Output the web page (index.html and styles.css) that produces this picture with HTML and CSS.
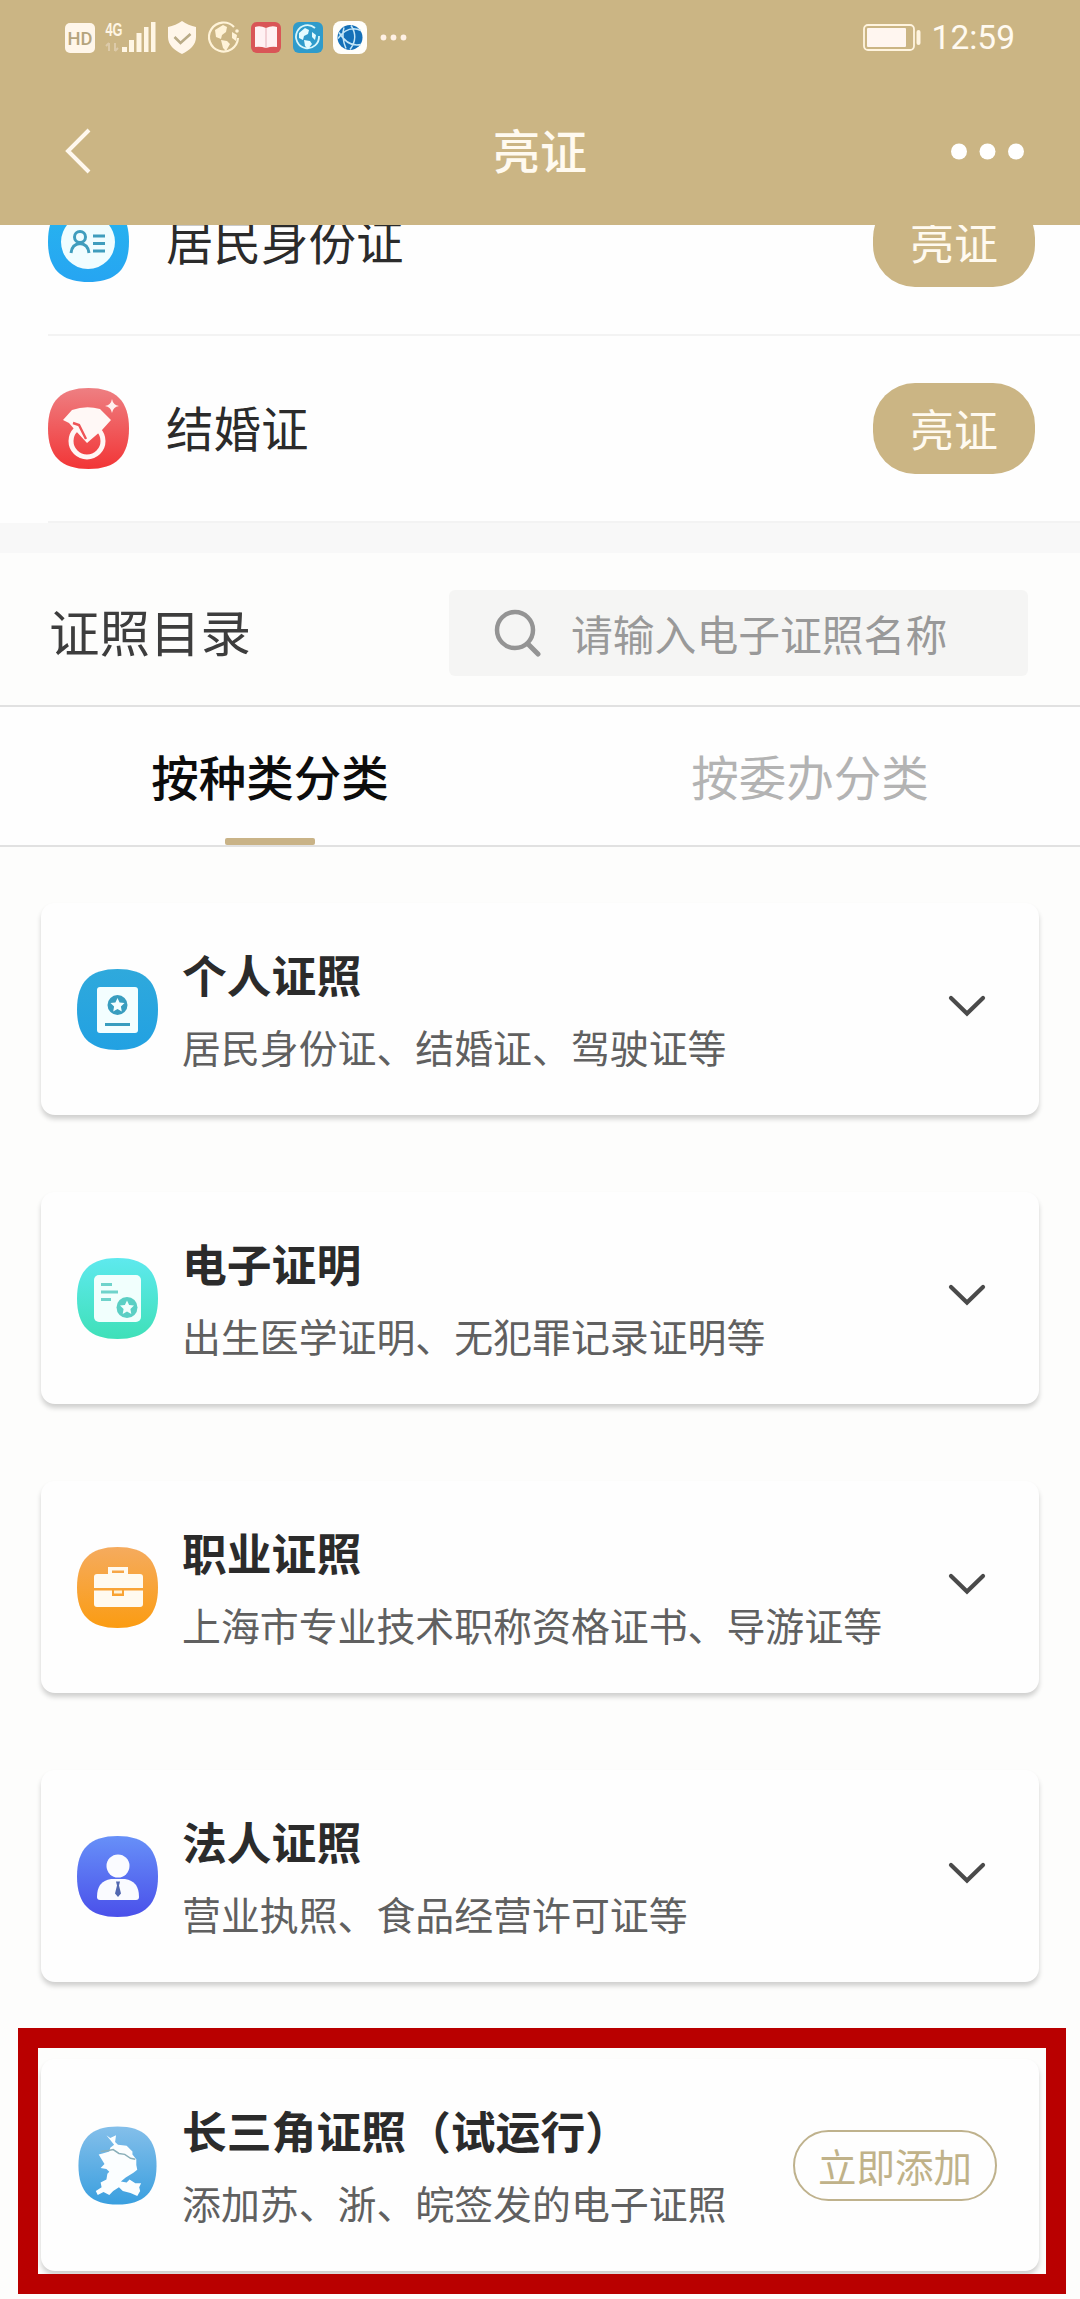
FILE: index.html
```html
<!DOCTYPE html>
<html lang="zh-CN">
<head>
<meta charset="utf-8">
<title>亮证</title>
<link rel="stylesheet" href="styles.css">
</head>
<body>
<svg width="0" height="0" class="defs">
  <defs>
    <path id="squircle" d="M40.500 0C68 0 81 13 81 40.500S68 81 40.500 81 0 68 0 40.500 13 0 40.500 0z"/>
    <path id="star" d="M0-7l2.100 4.500 4.900.6-3.600 3.400.9 4.900L0 4l-4.300 2.400.9-4.900L-7-1.900l4.900-.6z"/>
    <linearGradient id="g-id" x2="0" y2="1"><stop stop-color="#27b5ee"/><stop offset="1" stop-color="#26a5f2"/></linearGradient>
    <linearGradient id="g-red" x2="0" y2="1"><stop stop-color="#ee7f82"/><stop offset="1" stop-color="#f23536"/></linearGradient>
    <linearGradient id="g-blue" x2="0" y2="1"><stop stop-color="#2fa9dc"/><stop offset="1" stop-color="#22a1e2"/></linearGradient>
    <linearGradient id="g-teal" x2="0" y2="1"><stop stop-color="#5ee9ee"/><stop offset="1" stop-color="#3fe0b8"/></linearGradient>
    <linearGradient id="g-orange" x2="0" y2="1"><stop stop-color="#f5ab5e"/><stop offset="1" stop-color="#fb9c12"/></linearGradient>
    <linearGradient id="g-indigo" x2="0" y2="1"><stop stop-color="#6790f8"/><stop offset="1" stop-color="#4a50ea"/></linearGradient>
    <linearGradient id="g-sky" x2="0" y2="1"><stop stop-color="#84bfea"/><stop offset="1" stop-color="#3a9fdf"/></linearGradient>
  </defs>
</svg>

<header class="header">
  <div class="status">
    <svg class="status-icons" width="350" height="40" viewBox="0 0 350 40">
      <rect x="1" y="5" width="30" height="30" rx="5" fill="#fff6ea"/>
      <text x="16" y="27" class="hd" textLength="25" lengthAdjust="spacingAndGlyphs">HD</text>
      <text x="50" y="18" class="net" textLength="17" lengthAdjust="spacingAndGlyphs">4G</text>
      <path d="M45 33v-8m-3 3l3-3M51 25v8m3-3l-3 3" stroke="#dccaa9" stroke-width="2" fill="none"/>
      <path d="M58 34v-5h5v5zM65 34V22h5v12zM72.500 34V15h5v19zM80 34V9h4.500v25zM87 34V4h4.500v30z" fill="#fff6e4"/>
      <path d="M118 3c4 3 9 5 14 6v10c0 8-6 13-14 17-8-4-14-9-14-17V9c5-1 10-3 14-6z" fill="#fff6ea"/>
      <path d="M110.500 19l6 6 10-9" stroke="#b9ab87" stroke-width="2.600" fill="none"/>
      <path d="M170 9a14.500 14.500 0 1 0 4 11" stroke="#fff3d8" stroke-width="2.200" fill="none"/><path d="M151 12l8-5 4 2-1 5-4 3-1 4-5-2zM157 22l6 1 3 3-4 7-3-3zM168 14l5 3-1 6-4-3z" fill="#fff3d8"/><circle cx="173" cy="13" r="1.800" fill="#fff3d8"/>
      <rect x="187" y="4" width="30" height="31" rx="6" fill="#d95557"/>
      <path d="M191 9q5-2 11 1 6-3 11-1v20q-5-1-11 1-6-2-11-1z" fill="#fff1f3"/><path d="M202 10v20" stroke="#eec5cb" stroke-width="1.500"/>
      <rect x="229" y="4" width="30" height="31" rx="6" fill="#2f9bcb"/>
      <path d="M251 10a11.500 11.500 0 1 0 4 8" stroke="#d9f6fb" stroke-width="1.800" fill="none"/><path d="M235 15l6-5 4 2-1 4-4 2-1 4-4-2zM240 22l6 1 2 3-4 5-3-3zM248 14l4 3-1 5-3-3z" fill="#e4fbff"/>
      <rect x="269" y="3" width="34" height="33" rx="8" fill="#fffefa"/>
      <circle cx="286" cy="19.500" r="12.500" fill="#1470b8"/>
      <path d="M274 20.500q10-14 23-8M275 14.500q9 15 22 12M287 7.500q8 12-1 24M280 9.500q-3 9 2 21" stroke="#c4e6f7" stroke-width="1.500" fill="none"/>
      <g fill="#fff1e5"><circle cx="319.500" cy="19.500" r="2.900"/><circle cx="329.500" cy="19.500" r="2.900"/><circle cx="339.500" cy="19.500" r="2.900"/></g>
    </svg>
    <div class="status-right">
      <svg width="60" height="30" viewBox="0 0 60 30"><rect x="1" y="2" width="50" height="25" rx="4" fill="none" stroke="#fff4df" stroke-width="1.800"/><rect x="4" y="5" width="39" height="19" rx="1" fill="#fff6f0"/><path d="M55.500 9v11" stroke="#fff4df" stroke-width="4" stroke-linecap="round"/></svg>
      <span class="clock">12:59</span>
    </div>
  </div>
  <div class="nav">
    <svg width="30" height="48" viewBox="0 0 30 48"><path d="M28 3L7 24l21 21" fill="none" stroke="#fff8ee" stroke-width="4"/></svg>
    <h1 class="title">亮证</h1>
    <svg width="76" height="18" viewBox="0 0 76 18" fill="#fff"><circle cx="10" cy="9.500" r="8"/><circle cx="38.500" cy="9.500" r="8"/><circle cx="67" cy="9.500" r="8"/></svg>
  </div>
</header>

<main>
  <section class="mine">
    <div class="mine-row">
      <svg class="icon" viewBox="0 0 81 81"><use href="#squircle" fill="url(#g-id)"/><circle cx="40" cy="41" r="27" fill="#f0fdff"/><g fill="none" stroke="#3f9dbd" stroke-width="3"><circle cx="32" cy="36" r="5.500"/><path d="M23 52q1-9 9-9.500 8 .5 9 9.500M45 35h12M45 42.500h12M45 50h12"/></g></svg>
      <span class="mine-name">居民身份证</span>
      <button class="show">亮证</button>
    </div>
    <div class="mine-row">
      <svg class="icon" viewBox="0 0 81 81"><use href="#squircle" fill="url(#g-red)"/><circle cx="39" cy="53" r="16" fill="none" stroke="#fff6f4" stroke-width="5"/><path d="M15 32l9-10q14-5 28-1l11 11-9 10-15 13-12-13-6-7z" fill="#fff8f6"/><path d="M25 35l6 2 7 14" stroke="#ee5457" stroke-width="2.400" fill="none"/><path d="M64 11q1 6 7 7-6 1-7 7-1-6-7-7 6-1 7-7z" fill="#fff0ef"/></svg>
      <span class="mine-name">结婚证</span>
      <button class="show">亮证</button>
    </div>
  </section>

  <section class="catalog">
    <h2 class="catalog-title">证照目录</h2>
    <div class="search">
      <svg width="48" height="48" viewBox="0 0 48 48" fill="none" stroke="#949494"><circle cx="21" cy="21" r="18" stroke-width="4.500"/><path d="M34 35l10 10" stroke-width="5" stroke-linecap="round"/></svg>
      <span>请输入电子证照名称</span>
    </div>
  </section>

  <nav class="tabs">
    <div class="tab active">按种类分类</div>
    <div class="tab">按委办分类</div>
  </nav>

  <section class="cards">
    <article class="card">
      <svg class="icon" viewBox="0 0 81 81"><use href="#squircle" fill="url(#g-blue)"/><rect x="20" y="18" width="41" height="46" rx="3" fill="#f3feff"/><circle cx="40.500" cy="36" r="10" fill="#389dbf"/><use href="#star" x="40.500" y="36" fill="#f3feff"/><path d="M28 55.500h25" stroke="#389dbf" stroke-width="3"/></svg>
      <div class="card-text"><h3>个人证照</h3><p>居民身份证、结婚证、驾驶证等</p></div>
      <svg class="chevron" viewBox="0 0 38 22"><path d="M3 3l16 15.500L35 3"/></svg>
    </article>
    <article class="card">
      <svg class="icon" viewBox="0 0 81 81"><use href="#squircle" fill="url(#g-teal)"/><rect x="17" y="17" width="47" height="47" rx="5" fill="#f1fffd"/><path d="M24 26.500h11M24 34h17M24 41.500h10" stroke="#6fd3cb" stroke-width="3"/><circle cx="50" cy="49.500" r="10.500" fill="#5bcfc4"/><use href="#star" x="50" y="49.500" fill="#f1fffd"/></svg>
      <div class="card-text"><h3>电子证明</h3><p>出生医学证明、无犯罪记录证明等</p></div>
      <svg class="chevron" viewBox="0 0 38 22"><path d="M3 3l16 15.500L35 3"/></svg>
    </article>
    <article class="card">
      <svg class="icon" viewBox="0 0 81 81"><use href="#squircle" fill="url(#g-orange)"/><path d="M31 27v-7h20v7h12q3 0 3 3v11H17V30q0-3 3-3zM35 23.500V26h12v-2.500zM17 43.500h18V49h12v-5.500h19V57q0 3-3 3H20q-3 0-3-3z" fill="#fffaf0" fill-rule="evenodd"/><path d="M37 43.500h8v3h-8z" fill="#fff2d8"/></svg>
      <div class="card-text"><h3>职业证照</h3><p>上海市专业技术职称资格证书、导游证等</p></div>
      <svg class="chevron" viewBox="0 0 38 22"><path d="M3 3l16 15.500L35 3"/></svg>
    </article>
    <article class="card">
      <svg class="icon" viewBox="0 0 81 81"><use href="#squircle" fill="url(#g-indigo)"/><circle cx="41" cy="30" r="11.500" fill="#fafbff"/><path d="M20 61q0-16 14-18h14q14 2 14 18 0 3-3 3H23q-3 0-3-3z" fill="#fafbff"/><path d="M39 45.500h4l-1 4 2 8-3 3.500-3-3.500 2-8z" fill="#5268b0"/></svg>
      <div class="card-text"><h3>法人证照</h3><p>营业执照、食品经营许可证等</p></div>
      <svg class="chevron" viewBox="0 0 38 22"><path d="M3 3l16 15.500L35 3"/></svg>
    </article>
    <article class="card">
      <svg class="icon" viewBox="-1.500 -1.500 84 84"><use href="#squircle" fill="url(#g-sky)"/><path d="M29 9l4 3 6-3-1 7 3 3 9 1 6 6 0 3 4 5v6l1 5-4 3-8 5-5 4 6 1 3-3 6 4 6 0-2 4 1 4-3 5-7-3-8-2-4-4-6 4-4 4-6-3-6 3-2-4 6-4-1-5 6-3 1-6 2-2-3-3-6-1 4-4-3-5-3-5 4-1 7-2 1-4 4-3z" fill="#fbfeff"/><path d="M23 26l8-1 5-1 6 4 6 1 6 4 5 1" fill="none" stroke="#8aafb9" stroke-width="1.500"/></svg>
      <div class="card-text"><h3>长三角证照（试运行）</h3><p>添加苏、浙、皖签发的电子证照</p></div>
      <button class="add">立即添加</button>
    </article>
  </section>
</main>
<div class="highlight"></div>
</body>
</html>
```
FILE: styles.css
```css
* { box-sizing: border-box; }
body {
  position: relative;
  margin: 0;
  width: 1080px;
  height: 2299px;
  overflow: hidden;
  background: #fdfdfc;
  font-family: "Noto Sans CJK SC", sans-serif;
  color: #2b2b2b;
}
h1, h2, h3, p { margin: 0; font-weight: 400; }
button { border: 0; padding: 0; font-family: inherit; }
svg { display: block; flex: none; }
.defs { position: absolute; }

.header { height: 225px; background: #cbb584; color: #fffaf0; }
.status {
  display: flex;
  justify-content: space-between;
  height: 76px;
  padding: 18px 65px 0 64px;
}
.hd { font: 500 19px Roboto, sans-serif; fill: #b5a47e; text-anchor: middle; }
.net { font: 700 18px "Liberation Sans", sans-serif; fill: #fff6e4; text-anchor: middle; }
.status-right { display: flex; align-items: center; gap: 9px; height: 40px; }
.clock { font: 400 33.500px/40px Roboto, sans-serif; }
.nav {
  display: flex;
  align-items: center;
  justify-content: space-between;
  height: 150px;
  padding: 0 55px 0 61px;
}
.title { font-size: 47px; line-height: 60px; margin: -5px 0 0 40px; font-weight: 500; }

.mine { height: 298px; overflow: hidden; display: flex; flex-direction: column; justify-content: flex-end; background: #fefefe; }
.mine-row {
  flex: none;
  display: flex;
  align-items: center;
  height: 187px;
  margin-left: 48px;
  padding-right: 45px;
  border-bottom: 2px solid #f3f3f3;
}
.icon { width: 81px; height: 81px; }
.mine-name { flex: 1; margin: -3px 0 0 37px; font-size: 47.500px; line-height: 60px; }
.show {
  width: 162px;
  height: 91px;
  border-radius: 42px;
  background: #cbb584;
  color: #fffaf0;
  font-size: 44px;
  line-height: 91px;
}

.catalog {
  display: flex;
  align-items: flex-start;
  justify-content: space-between;
  height: 184px;
  padding: 37px 52px 0 49px;
  border-top: 30px solid #f8f8f8;
  border-bottom: 2px solid #e1e1e1;
}
.catalog-title { font-size: 50.500px; line-height: 60px; color: #3d3d3d; margin-top: 10px; }
.search {
  display: flex;
  align-items: center;
  gap: 29px;
  width: 579px;
  height: 86px;
  padding-left: 45px;
  border-radius: 6px;
  background: #f5f5f4;
  color: #999;
  font-size: 41.800px;
  line-height: 50px;
}

.tabs { display: flex; height: 140px; border-bottom: 2px solid #e1e1e1; background: #fefefe; }
.tab { flex: 1; display: flex; flex-direction: column; align-items: center; font-size: 47.500px; line-height: 138px; color: #b3b3b3; }
.tab.active { color: #0c0c0c; font-weight: 500; }
.tab.active::after { content: ""; width: 90px; height: 7px; margin-top: -7px; border-radius: 2px; background: #c9b387; }

.cards { display: flex; flex-direction: column; gap: 77px; padding: 56px 41px 0; }
.card {
  display: flex;
  align-items: center;
  height: 212px;
  padding: 0 53px 0 36px;
  border-radius: 14px;
  background: #fefefe;
  box-shadow: 0 4px 5px rgba(0, 0, 0, .18);
}
.card-text { flex: 1; margin-left: 24px; }
.card h3 { font-size: 44.800px; line-height: 60px; font-weight: 700; }
.card p { margin-top: 14px; font-size: 38.900px; line-height: 56px; color: #606060; white-space: nowrap; }
.chevron { width: 38px; height: 22px; margin-bottom: 6px; fill: none; stroke: #4a4a4a; stroke-width: 4.200; stroke-linecap: round; }
.add {
  width: 204px;
  height: 71px;
  margin-right: -11px;
  border: 2.500px solid #bfb28d;
  border-radius: 36px;
  background: transparent;
  color: #c0b289;
  font-size: 38.500px;
  line-height: 64px;
}
.highlight { position: absolute; left: 18px; top: 2028px; width: 1048px; height: 266px; border: 20px solid #b90000; }
```
